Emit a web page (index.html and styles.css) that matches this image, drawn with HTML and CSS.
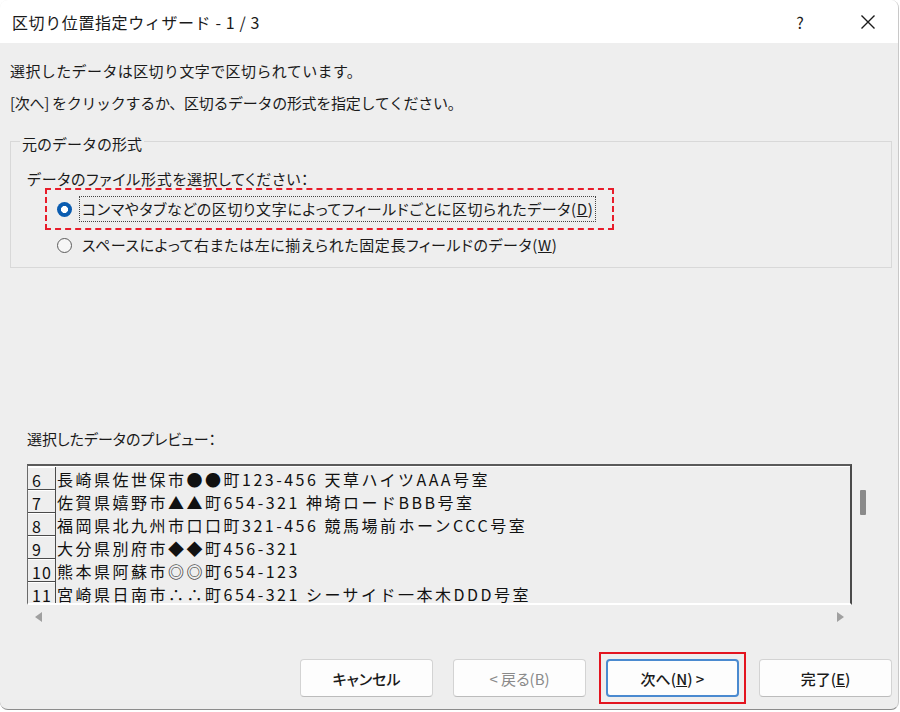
FILE: index.html
```html
<!DOCTYPE html>
<html lang="ja">
<head>
  <meta charset="UTF-8">
  <title>区切り位置指定ウィザード - 1 / 3</title>
  <link rel="stylesheet" href="styles.css">
</head>
<body>
  <div class="window">
    <div class="titlebar">
      <span class="title">区切り位置指定ウィザード - 1 / 3</span>
      <span class="help">?</span>
      <span class="close">
        <svg width="16" height="16" viewBox="0 0 16 16"><path d="M1.5 1.5 L14.5 14.5 M14.5 1.5 L1.5 14.5" stroke="#1a1a1a" stroke-width="1.4" fill="none"/></svg>
      </span>
    </div>

    <div class="content">
      <p class="intro">選択したデータは区切り文字で区切られています。</p>
      <p class="intro">[次へ] をクリックするか、区切るデータの形式を指定してください。</p>

      <div class="group">
        <div class="group-title">元のデータの形式</div>
        <div class="prompt">データのファイル形式を選択してください：</div>
        <div class="highlight">
          <label class="option">
            <span class="radio checked"></span>
            <span class="option-text focused">コンマやタブなどの区切り文字によってフィールドごとに区切られたデータ(<u>D</u>)</span>
          </label>
        </div>
        <label class="option second">
          <span class="radio"></span>
          <span class="option-text">スペースによって右または左に揃えられた固定長フィールドのデータ(<u>W</u>)</span>
        </label>
      </div>

      <div class="preview-label">選択したデータのプレビュー：</div>
      <div class="preview-area">
        <div class="preview">
          <div class="row"><span class="num">6</span><span class="cell">長崎県佐世保市●●町123-456 天草ハイツAAA号室</span></div>
          <div class="row"><span class="num">7</span><span class="cell">佐賀県嬉野市▲▲町654-321 神埼ロードBBB号室</span></div>
          <div class="row"><span class="num">8</span><span class="cell">福岡県北九州市口口町321-456 競馬場前ホーンCCC号室</span></div>
          <div class="row"><span class="num">9</span><span class="cell">大分県別府市◆◆町456-321</span></div>
          <div class="row"><span class="num">10</span><span class="cell">熊本県阿蘇市◎◎町654-123</span></div>
          <div class="row"><span class="num">11</span><span class="cell">宮崎県日南市∴∴町654-321 シーサイド一本木DDD号室</span></div>
        </div>
        <div class="vscroll"><div class="thumb"></div></div>
      </div>
      <div class="hscroll">
        <span class="arrow left"></span>
        <span class="arrow right"></span>
      </div>
    </div>

    <div class="footer">
      <button class="btn">キャンセル</button>
      <button class="btn" disabled>&lt; 戻る(B)</button>
      <span class="marked"><button class="btn default">次へ(<u>N</u>) &gt;</button></span>
      <button class="btn">完了(<u>E</u>)</button>
    </div>
  </div>
</body>
</html>
```

FILE: styles.css
```css
body {
  margin: 0;
  background: #fff;
  font-family: "Noto Sans CJK JP", "Noto Sans", sans-serif;
  color: #1a1a1a;
}
.window {
  width: 898px;
  height: 709px;
  background: #eeeeee;
  border-radius: 8px;
  border-right: 1px solid #c8c8c8;
  border-bottom: 1px solid #8c8c8c;
  overflow: hidden;
  display: flex;
  flex-direction: column;
}

/* title bar */
.titlebar {
  height: 43px;
  background: #fff;
  display: flex;
  align-items: center;
  padding: 0 7px 0 12px;
  font-size: 16px;
}
.title {
  flex: 1;
  letter-spacing: 0.6px;
}
.help {
  width: 46px;
  text-align: center;
  font-size: 16px;
}
.close {
  width: 46px;
  margin-left: 22px;
  display: flex;
  justify-content: center;
}

.content {
  padding: 0 6px 0 10px;
  font-size: 15px;
}
.intro {
  margin: 0;
  line-height: 32px;
  letter-spacing: -0.3px;
}
.intro:first-child {
  margin-top: 12px;
  letter-spacing: 0.4px;
}

/* group box */
.group {
  margin-top: 22px;
  border: 1px solid #d8d8d8;
  padding: 0 0 9px 16px;
}
.group-title {
  width: max-content;
  margin: -8px 0 0 -7px;
  padding: 0 2px;
  background: #eeeeee;
  line-height: 20px;
}
.prompt {
  margin-top: 14px;
  line-height: 22px;
  font-feature-settings: "palt";
  letter-spacing: 0.7px;
}
.highlight {
  margin: -2px 0 0 18px;
  width: 555px;
  height: 38px;
  border: 2px dashed #e81c2a;
  display: flex;
  align-items: center;
  padding-left: 10px;
}
.option {
  display: flex;
  align-items: center;
  gap: 7px;
  line-height: 24px;
  font-feature-settings: "palt";
  letter-spacing: 0.6px;
}
.option.second {
  margin: 2px 0 0 30px;
}
.option-text {
  padding: 0 2px;
  border: 1px solid transparent;
}
.option-text.focused {
  border: 1px dotted #444;
}
.radio {
  width: 13px;
  height: 13px;
  border: 1px solid #5c5c5c;
  border-radius: 50%;
  background: #f6f6f6;
}
.radio.checked {
  width: 15px;
  height: 15px;
  border: none;
  background: radial-gradient(circle, #fff 0 3.2px, #0a5cb0 3.8px);
}

/* preview */
.preview-label {
  margin: 160px 0 0 17px;
  line-height: 22px;
  font-feature-settings: "palt";
}
.preview-area {
  display: flex;
  margin: 14px 0 0 17px;
}
.preview {
  width: 822px;
  height: 136px;
  border-top: 2px solid #5a5a5a;
  border-left: 1px solid #6a6a6a;
  border-right: 2px solid #4a4a4a;
  border-bottom: 2px solid #fff;
  box-shadow: inset 0 1px #fff;
  padding-top: 1px;
  overflow: hidden;
}
.row {
  display: flex;
  height: 23px;
  font-size: 16px;
  letter-spacing: 2.5px;
  color: #111;
  white-space: nowrap;
}
.num {
  width: 23px;
  flex-shrink: 0;
  padding-left: 4px;
  border-bottom: 1px solid #4a4a4a;
  border-right: 1px solid #4a4a4a;
  box-shadow: inset 0 1px #fff;
  line-height: 26px;
  letter-spacing: 1px;
}
.cell {
  padding-left: 1px;
  line-height: 24px;
}
.vscroll {
  margin-left: 8px;
  padding-top: 26px;
}
.thumb {
  width: 6px;
  height: 25px;
  background: #8a8a8a;
  border-radius: 1px;
}
.hscroll {
  width: 809px;
  margin: 7px 0 0 17px;
  padding: 0 8px;
  display: flex;
  justify-content: space-between;
}
.arrow {
  width: 0;
  height: 0;
  border-top: 5px solid transparent;
  border-bottom: 5px solid transparent;
}
.arrow.left {
  border-right: 7px solid #a0a0a0;
}
.arrow.right {
  border-left: 7px solid #a0a0a0;
}

/* buttons */
.footer {
  margin-top: 37px;
  display: flex;
  justify-content: flex-end;
  align-items: center;
  gap: 20px;
  padding-right: 6px;
}
.btn {
  width: 133px;
  height: 38px;
  font-family: inherit;
  font-feature-settings: "palt";
  font-size: 15px;
  font-weight: 500;
  color: #1a1a1a;
  background: #fdfdfd;
  border: 1px solid #d3d3d3;
  border-bottom-color: #bcbcbc;
  border-radius: 4px;
}
.btn:disabled {
  color: #8a8a8a;
  font-weight: normal;
}
.btn.default {
  display: block;
  border: 2px solid #4a8ad0;
}
.marked {
  margin: -7px;
  padding: 5px;
  border: 2px solid #e3141f;
}
```
